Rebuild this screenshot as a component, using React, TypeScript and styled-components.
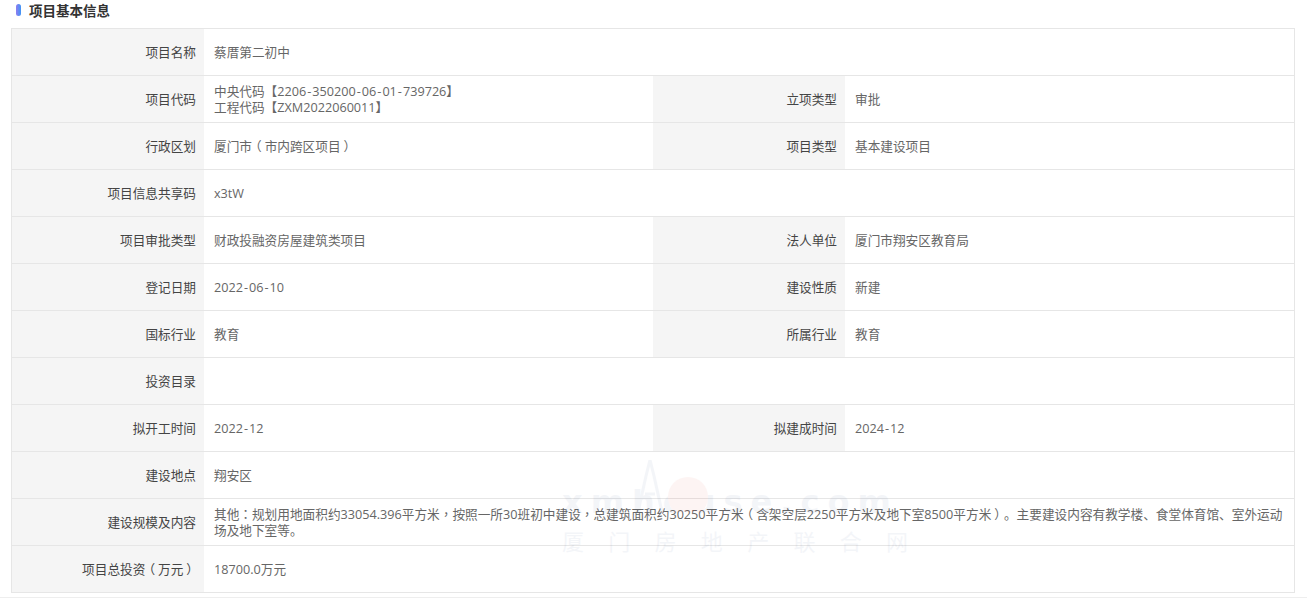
import React from "react";
import styled, { createGlobalStyle } from "styled-components";

const Global = createGlobalStyle`
  html, body { margin: 0; padding: 0; background: #fff; }
  body {
    font-family: "Open Sans", "Noto Sans CJK SC", sans-serif;
    font-size: 12.67px;
    color: #666;
    overflow: hidden;
    text-spacing-trim: space-all;
  }
`;

const Page = styled.div`
  position: relative;
  width: 1307px;
  height: 598px;
  overflow: hidden;
  box-sizing: border-box;
  border-bottom: 1px solid #eeeeee;
`;

const Heading = styled.div`
  display: flex;
  align-items: center;
  height: 22px;
  padding-bottom: 2px;
  box-sizing: border-box;
  margin-left: 16px;
  margin-bottom: 6px;
  font-size: 13.5px;
  font-weight: 700;
  color: #333;
`;

const Marker = styled.span`
  width: 5px;
  height: 12px;
  border-radius: 2.5px;
  background: linear-gradient(90deg, #8f7cf0, #3f95f5);
  margin-right: 8px;
`;

const Table = styled.div`
  display: grid;
  grid-template-columns: 192px 449px 192px 449px;
  grid-template-rows: repeat(11, 47px) 46px;
  width: 1284px;
  margin-left: 11px;
  box-sizing: border-box;
  border: 1px solid #e6e6e6;
`;

const Cell = styled.div<{ $last?: boolean }>`
  display: flex;
  align-items: center;
  box-sizing: border-box;
  line-height: 16px;
  padding-bottom: 1px;
  border-bottom: ${(p) => (p.$last ? "0" : "1px solid #e6e6e6")};
`;

const Label = styled(Cell)`
  justify-content: flex-end;
  padding-right: 8px;
  background: #f5f5f5;
  color: #444;
`;

const Value = styled(Cell)<{ $span?: boolean }>`
  padding-left: 10px;
  padding-right: 10px;
  grid-column: ${(p) => (p.$span ? "span 3" : "span 1")};
  color: #666;
`;

const Text = styled.span`
  display: block;
`;

const Stack = styled.div`
  display: flex;
  flex-direction: column;
`;

const Punct = styled.span<{ $shift?: number }>`
  display: inline-block;
  font-family: "Noto Sans CJK TC", sans-serif;
  transform: translateX(${(p) => p.$shift ?? 0}px);
`;

const Hyphen = styled.span`
  padding: 0 1px;
`;

const Watermark = styled.div`
  position: absolute;
  left: 562px;
  top: 460px;
  width: 346px;
  opacity: 0.05;
  color: #2b4a8c;
  pointer-events: none;
`;

const MarkTop = styled.div`
  font-family: "DejaVu Sans", sans-serif;
  font-size: 32px;
  font-weight: 700;
  letter-spacing: 8px;
  line-height: 34px;
  margin-top: 25px;
  white-space: nowrap;
`;

const MarkBottom = styled.div`
  display: flex;
  justify-content: space-between;
  font-family: "Noto Sans CJK SC", sans-serif;
  font-size: 22px;
  line-height: 30px;
  margin-top: 6px;
`;

const MarkArt = styled.svg`
  position: absolute;
  left: 68px;
  top: 0;
`;

const wrapPunct = (s: string) =>
  s.split(/([（），：-])/).map((part, i) => {
    if (part === "-") return <Hyphen key={i}>-</Hyphen>;
    if (part === "（") return <Punct key={i} $shift={-3}>{part}</Punct>;
    if (part === "）") return <Punct key={i} $shift={3}>{part}</Punct>;
    return part === "，" || part === "：" ? <Punct key={i}>{part}</Punct> : part;
  });

type Row = { k: string; v: string | string[]; k2?: string; v2?: string };

const rows: Row[] = [
  { k: "项目名称", v: "蔡厝第二初中" },
  {
    k: "项目代码",
    v: ["中央代码【2206-350200-06-01-739726】", "工程代码【ZXM2022060011】"],
    k2: "立项类型",
    v2: "审批",
  },
  { k: "行政区划", v: "厦门市（市内跨区项目）", k2: "项目类型", v2: "基本建设项目" },
  { k: "项目信息共享码", v: "x3tW" },
  { k: "项目审批类型", v: "财政投融资房屋建筑类项目", k2: "法人单位", v2: "厦门市翔安区教育局" },
  { k: "登记日期", v: "2022-06-10", k2: "建设性质", v2: "新建" },
  { k: "国标行业", v: "教育", k2: "所属行业", v2: "教育" },
  { k: "投资目录", v: "" },
  { k: "拟开工时间", v: "2022-12", k2: "拟建成时间", v2: "2024-12" },
  { k: "建设地点", v: "翔安区" },
  {
    k: "建设规模及内容",
    v: "其他：规划用地面积约33054.396平方米，按照一所30班初中建设，总建筑面积约30250平方米（含架空层2250平方米及地下室8500平方米）。主要建设内容有教学楼、食堂体育馆、室外运动场及地下室等。",
  },
  { k: "项目总投资（万元）", v: "18700.0万元" },
];

export default function App() {
  return (
    <Page>
      <Global />
      <Heading>
        <Marker />
        项目基本信息
      </Heading>
      <Table>
        {rows.map((r, i) => {
          const last = i === rows.length - 1;
          return (
            <React.Fragment key={r.k}>
              <Label $last={last}>
                <Text>{wrapPunct(r.k)}</Text>
              </Label>
              <Value $span={!r.k2} $last={last}>
                {Array.isArray(r.v) ? (
                  <Stack>
                    {r.v.map((line) => (
                      <Text key={line}>{wrapPunct(line)}</Text>
                    ))}
                  </Stack>
                ) : (
                  <Text>{wrapPunct(r.v)}</Text>
                )}
              </Value>
              {r.k2 && (
                <>
                  <Label $last={last}>{r.k2}</Label>
                  <Value $last={last}>{wrapPunct(r.v2 ?? "")}</Value>
                </>
              )}
            </React.Fragment>
          );
        })}
      </Table>
      <Watermark>
        <MarkArt width="120" height="52" viewBox="0 0 120 52">
          <circle cx="58" cy="37" r="20" fill="#e8402a" />
          <path d="M8 52 L16 16 L20 0 L24 16 L32 52 M15 34 H25" stroke="#2b4a8c" strokeWidth="3" fill="none" />
        </MarkArt>
        <MarkTop>xmhouse.com</MarkTop>
        <MarkBottom>
          {"厦门房地产联合网".split("").map((c) => (
            <span key={c}>{c}</span>
          ))}
        </MarkBottom>
      </Watermark>
    </Page>
  );
}
